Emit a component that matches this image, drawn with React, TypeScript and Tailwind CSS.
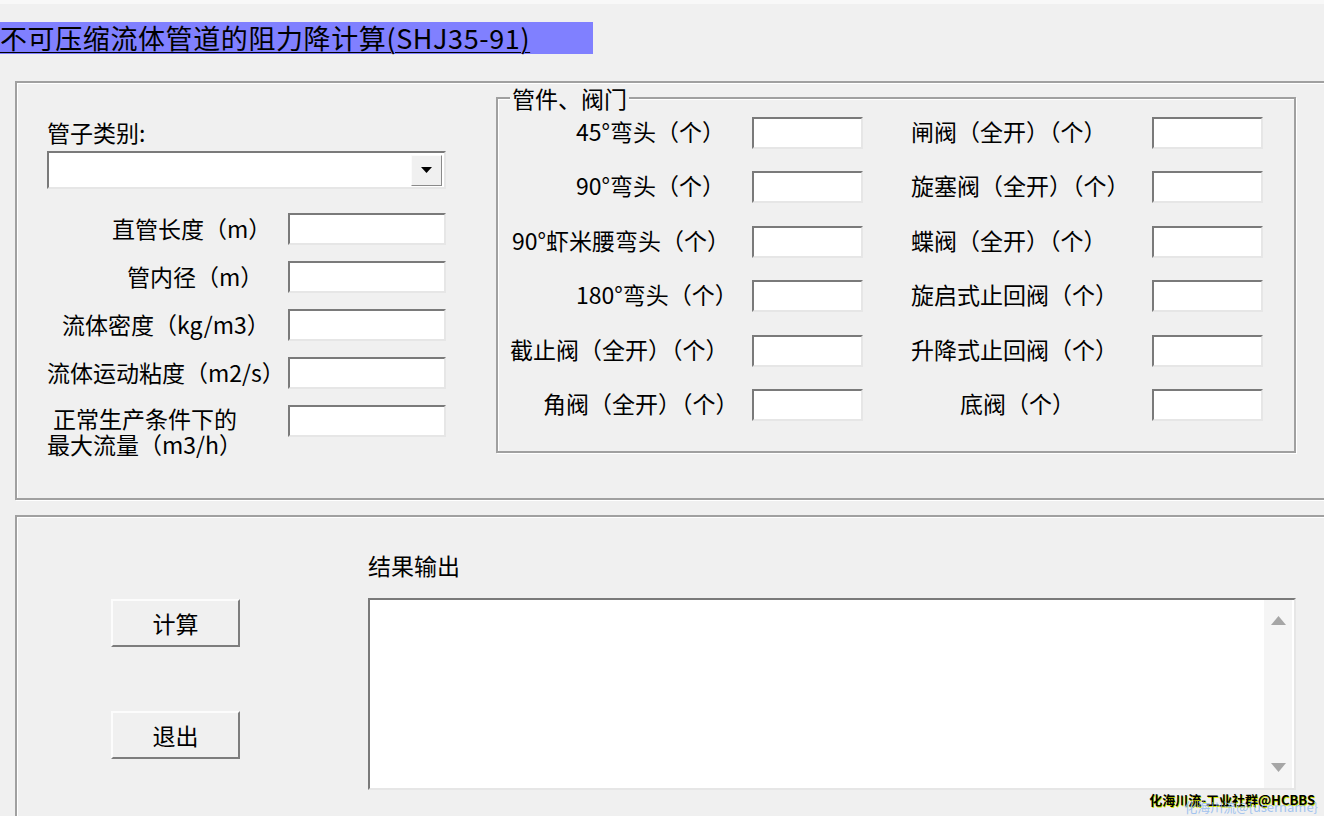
import React from 'react'

const sunken =
  'bg-white border-2 border-t-[#7a7a7a] border-l-[#7a7a7a] border-b-[#e6e6e6] border-r-[#e6e6e6]'
const etched =
  'border-2 border-[#a0a0a0] shadow-[1px_1px_0_#ffffff,inset_1px_1px_0_#ffffff]'

interface FittingRow {
  left: string
  leftPad: string
  right: string
  rightPad: string
}

const fittings: FittingRow[] = [
  { left: '45°弯头（个）', leftPad: 'ml-[78px]', right: '闸阀（全开）（个）', rightPad: 'ml-[48px]' },
  { left: '90°弯头（个）', leftPad: 'ml-[78px]', right: '旋塞阀（全开）（个）', rightPad: 'ml-[48px]' },
  { left: '90°虾米腰弯头（个）', leftPad: 'ml-[14px]', right: '蝶阀（全开）（个）', rightPad: 'ml-[48px]' },
  { left: '180°弯头（个）', leftPad: 'ml-[78px]', right: '旋启式止回阀（个）', rightPad: 'ml-[48px]' },
  { left: '截止阀（全开）（个）', leftPad: 'ml-[12px]', right: '升降式止回阀（个）', rightPad: 'ml-[48px]' },
  { left: '角阀（全开）（个）', leftPad: 'ml-[45px]', right: '底阀（个）', rightPad: 'ml-[97px]' },
]

const params = [
  { label: '直管长度（m）', pad: 'ml-[65px]' },
  { label: '管内径（m）', pad: 'ml-[80px]' },
  { label: '流体密度（kg/m3）', pad: 'ml-[15px]' },
  { label: '流体运动粘度（m2/s）', pad: 'ml-0' },
]

function WinButton({ label }: { label: string }) {
  return (
    <button className="w-[129px] h-[48px] bg-[#f0f0f0] border-2 border-t-[#fcfcfc] border-l-[#fcfcfc] border-b-[#7d7d7d] border-r-[#7d7d7d] text-[23px] leading-[30px] text-black">
      {label}
    </button>
  )
}

export default function App() {
  return (
    <div className="relative w-[1324px] h-[816px] overflow-hidden bg-[#f0f0f0] text-black font-['Noto_Sans_CJK_SC','Liberation_Sans',sans-serif]">
      <div className="h-[4px] bg-[#f8f8f8]" />

      {/* Title */}
      <div className="mt-[18px] w-[593px] h-[32px] bg-[#8080ff]">
        <span className="text-[27px] leading-[32px] tracking-[0.6px] underline decoration-1 underline-offset-[3px] whitespace-nowrap">
          不可压缩流体管道的阻力降计算(SHJ35-91)
        </span>
      </div>

      {/* Input panel */}
      <div className={`ml-[15px] mt-[27px] w-[1330px] h-[419px] flex ${etched}`}>
        <div className="ml-[30px] w-[399px] flex flex-col">
          <div className="mt-[34px] text-[23px] leading-[30px]">管子类别:</div>
          <div className={`mt-[4px] h-[38px] flex items-center justify-end pr-[2px] ${sunken}`}>
            <div className="w-[31px] h-[31px] bg-[#f0f0f0] border border-t-[#fbfbfb] border-l-[#fbfbfb] border-b-[#8a8a8a] border-r-[#8a8a8a] flex items-center justify-center">
              <svg width="11" height="6" viewBox="0 0 11 6">
                <path d="M0 0h11L5.5 6z" fill="#000" />
              </svg>
            </div>
          </div>

          <div className="mt-[24px] flex flex-col gap-[16px]">
            {params.map((p) => (
              <div key={p.label} className="flex h-[32px] items-start">
                <span className={`${p.pad} text-[23px] leading-[30px] whitespace-nowrap`}>{p.label}</span>
                <div className={`ml-auto w-[158px] h-[32px] ${sunken}`} />
              </div>
            ))}
            <div className="flex h-[54px] items-start">
              <div className="text-[23px] leading-[26px] whitespace-nowrap">
                <div className="ml-[6px]">正常生产条件下的</div>
                <div>最大流量（m3/h）</div>
              </div>
              <div className={`ml-auto w-[158px] h-[32px] ${sunken}`} />
            </div>
          </div>
        </div>

        {/* 管件、阀门 group */}
        <div className={`relative ml-[50px] mt-[14px] w-[800px] h-[356px] ${etched}`}>
          <span className="absolute left-[12px] -top-[13px] px-[2px] bg-[#f0f0f0] text-[23px] leading-[24px]">
            管件、阀门
          </span>
          <div className="pt-[18px] flex flex-col gap-[22.4px]">
            {fittings.map((f) => (
              <div key={f.left} className="flex h-[32px] items-start">
                <div className="w-[254px]">
                  <span className={`block ${f.leftPad} text-[23px] leading-[28px] whitespace-nowrap`}>{f.left}</span>
                </div>
                <div className={`w-[111px] h-[32px] ${sunken}`} />
                <div className="w-[289px]">
                  <span className={`block ${f.rightPad} text-[23px] leading-[28px] whitespace-nowrap`}>{f.right}</span>
                </div>
                <div className={`w-[111px] h-[32px] ${sunken}`} />
              </div>
            ))}
          </div>
        </div>
      </div>

      {/* Output panel */}
      <div className={`ml-[15px] mt-[15px] w-[1330px] h-[320px] flex ${etched}`}>
        <div className="ml-[94px] mt-[82px] flex flex-col gap-[64px]">
          <WinButton label="计算" />
          <WinButton label="退出" />
        </div>
        <div className="ml-[128px] flex flex-col">
          <div className="mt-[33px] text-[23px] leading-[30px]">结果输出</div>
          <div className={`mt-[18px] w-[928px] h-[192px] flex ${sunken}`}>
            <div className="flex-1" />
            <div className="w-[28px] mr-[2px] bg-[#f5f5f5] flex flex-col items-center justify-between py-[16px]">
              <svg width="15" height="9" viewBox="0 0 15 9">
                <path d="M7.5 0L15 9H0z" fill="#a6a6a6" />
              </svg>
              <svg width="15" height="9" viewBox="0 0 15 9">
                <path d="M0 0h15L7.5 9z" fill="#a6a6a6" />
              </svg>
            </div>
          </div>
        </div>
      </div>

      {/* watermark */}
      <div className="absolute right-[9px] bottom-[9px] text-[13px] leading-[14px] font-bold text-black whitespace-nowrap [text-shadow:1px_1px_0_#d8e800]">
        化海川流-工业社群@HCBBS
      </div>
      <div className="absolute right-[6px] bottom-[2px] text-[13px] leading-[14px] text-[#8fb8ee] opacity-80 whitespace-nowrap">
        化海川流@{'{username}'}
      </div>
    </div>
  )
}
